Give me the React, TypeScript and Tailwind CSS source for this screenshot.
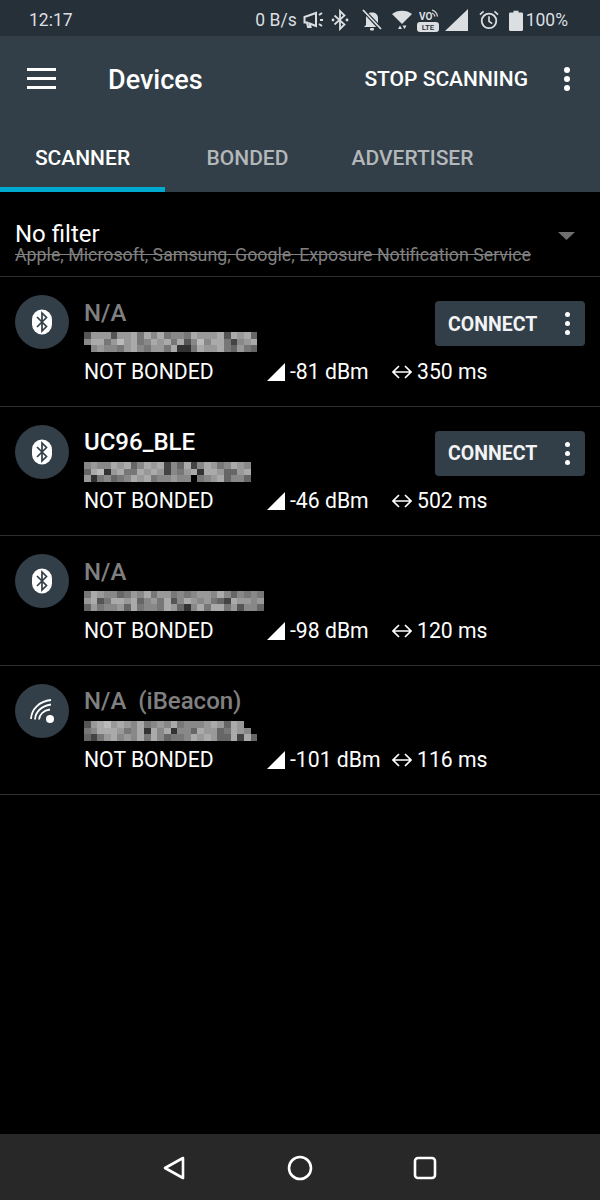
type Device = {
  name: string;
  nameActive?: boolean;
  kind: "ble" | "beacon";
  mosaic: string[];
  rssi: string;
  interval: string;
  connect?: boolean;
};

const devices: Device[] = [
  {
    name: "N/A",
    kind: "ble",
    rssi: "-81 dBm",
    interval: "350 ms",
    connect: true,
    mosaic: [
      "5999599a7a8a7887a999a5a9a6",
      "8aa79b9a78a9a7a58b8aa7489a",
      "0898879a87997a337a99a76976",
    ],
  },
  {
    name: "UC96_BLE",
    nameActive: true,
    kind: "ble",
    rssi: "-46 dBm",
    interval: "502 ms",
    connect: true,
    mosaic: [
      "8988a9a68a9a486a48a978a98",
      "6ab39a77a9a94879a3aa9669a",
      "9378678a9a7889880789a6886",
    ],
  },
  {
    name: "N/A",
    kind: "ble",
    rssi: "-98 dBm",
    interval: "120 ms",
    mosaic: [
      "7a9886798a7997878998a868787",
      "9a57aa9a6897a58a989764a9989",
      "6978896a7887a9638a7aa795886",
    ],
  },
  {
    name: "N/A  (iBeacon)",
    kind: "beacon",
    rssi: "-101 dBm",
    interval: "116 ms",
    mosaic: [
      "59ab9a98a7898a78889a96a900",
      "78aaa978a3a8a3886a9967a980",
      "6479a898a7a86778a9a966a4a6",
    ],
  },
];

function Mosaic({ rows }: { rows: string[] }) {
  const cell = 6.67;
  return (
    <svg width={rows[0].length * cell} height={20} shapeRendering="crispEdges" className="block">
      {rows.map((row, y) =>
        row.split("").map((c, x) => {
          const v = parseInt(c, 16) * 17;
          return <rect key={`${x}-${y}`} x={x * cell} y={y * cell} width={cell + 0.5} height={cell + 0.5} fill={`rgb(${v},${v},${v})`} />;
        })
      )}
    </svg>
  );
}

function Dots({ size = 5, gap = 4 }: { size?: number; gap?: number }) {
  return (
    <div className="flex flex-col items-center" style={{ gap }}>
      <span className="rounded-full bg-white" style={{ width: size, height: size }} />
      <span className="rounded-full bg-white" style={{ width: size, height: size }} />
      <span className="rounded-full bg-white" style={{ width: size, height: size }} />
    </div>
  );
}

function SignalTriangle({ w = 18, h = 18, color = "#ffffff" }: { w?: number; h?: number; color?: string }) {
  return (
    <svg width={w} height={h} viewBox="0 0 18 18" preserveAspectRatio="none" className="shrink-0">
      <path d="M0 18 L18 0 V18 Z" fill={color} />
    </svg>
  );
}

function BleBadge() {
  return (
    <svg width="54" height="54" viewBox="0 0 54 54" className="shrink-0">
      <circle cx="27" cy="27" r="27" fill="#333f48" />
      <rect x="17" y="14.5" width="20" height="25" rx="10" fill="#ffffff" />
      <path d="M22 22 L31.5 31.5 L27 36 V18 L31.5 22.5 L22 32" fill="none" stroke="#333f48" strokeWidth="1.7" />
    </svg>
  );
}

function BeaconBadge() {
  return (
    <svg width="54" height="54" viewBox="0 0 54 54" className="shrink-0">
      <circle cx="27" cy="27" r="27" fill="#333f48" />
      <g fill="none" stroke="#ffffff" strokeWidth="1.8">
        <path d="M16 35 C16.5 25 24 17.5 36 16" />
        <path d="M20 35.5 C20.5 28 26 22 36 20.5" />
        <path d="M24 35.5 C24.5 31 28 26.5 35 25.5" />
      </g>
      <circle cx="35" cy="35" r="4" fill="#ffffff" />
    </svg>
  );
}

function StatusIcons() {
  const c = "#dcdfe1";
  return (
    <div className="flex items-center">
      <svg width="23" height="18" viewBox="0 0 23 18" className="ml-[6px]">
        <path d="M1.5 6 L13 2 V15 L6.5 12.5 L7.5 16 H5 L4 11.5 H1.5 Z" fill="none" stroke={c} strokeWidth="2" />
        <path d="M16 4 L19 2 M17 9 H20 M16 13 L19 15" stroke={c} strokeWidth="2" />
      </svg>
      <svg width="18" height="22" viewBox="0 0 18 22" className="ml-[5px]">
        <path d="M3.5 6.5 L13.5 15.5 L9 20 V2 L13.5 6.5 L3.5 15.5" fill="none" stroke={c} strokeWidth="1.8" />
        <circle cx="2" cy="11" r="1.4" fill={c} />
        <circle cx="16" cy="11" r="1.4" fill={c} />
      </svg>
      <svg width="20" height="22" viewBox="0 0 20 22" className="ml-[13px]">
        <path d="M4 16 V9 C4 5.5 6.5 3.5 10 3.5 C13.5 3.5 16 5.5 16 9 V16 L18 18 H2 Z" fill={c} />
        <rect x="8" y="19" width="4" height="2.5" rx="1" fill={c} />
        <path d="M1 1 L19 20" stroke="#263038" strokeWidth="4" />
        <path d="M1 1 L19 20" stroke={c} strokeWidth="1.8" />
      </svg>
      <svg width="20" height="20" viewBox="0 0 20 20" className="ml-[10px]">
        <path d="M0 4 C5 -0.5 15 -0.5 20 4 L10 14 Z" fill={c} />
        <path d="M6 19 L8 15.5 L10 19 Z M10.5 15.5 H14.5 L12.5 19 Z" fill={c} />
      </svg>
      <svg width="22" height="24" viewBox="0 0 22 24" className="ml-[5px]">
        <text x="2" y="11.5" fontSize="10" fontWeight="700" fill={c} fontFamily="Roboto, sans-serif">VO</text>
        <path d="M15 2 C18 3 20 5 20.5 8.5 M15 5 C16.5 5.5 17.5 6.5 18 8.5" fill="none" stroke={c} strokeWidth="1.2" />
        <rect x="0" y="14" width="22" height="10" rx="3" fill={c} />
        <text x="11" y="22" fontSize="8" fontWeight="500" fill="#263038" textAnchor="middle" fontFamily="Roboto, sans-serif">LTE</text>
      </svg>
      <div className="ml-[6px]">
        <SignalTriangle w={23} h={22} color={c} />
      </div>
      <svg width="20" height="20" viewBox="0 0 22 22" className="ml-[11px]">
        <circle cx="11" cy="12" r="8" fill="none" stroke={c} strokeWidth="2" />
        <path d="M11 7 V12.5 L14.5 15 M1 5 L5 1.5 M21 5 L17 1.5" fill="none" stroke={c} strokeWidth="1.8" />
      </svg>
      <svg width="14" height="21" viewBox="0 0 14 26" preserveAspectRatio="none" className="ml-[10px]">
        <path d="M4.5 1 H9.5 V3 H12.5 A1.5 1.5 0 0 1 14 4.5 V24.5 A1.5 1.5 0 0 1 12.5 26 H1.5 A1.5 1.5 0 0 1 0 24.5 V4.5 A1.5 1.5 0 0 1 1.5 3 H4.5 Z" fill={c} />
      </svg>
      <span className="ml-[3px]">100%</span>
    </div>
  );
}

function DeviceRow({ device }: { device: Device }) {
  return (
    <div className="flex h-[129.5px] border-b border-[#2e2e2e] pl-[15px] pr-[15px] pt-[18px]">
      {device.kind === "ble" ? <BleBadge /> : <BeaconBadge />}
      <div className="ml-[15px] flex-1">
        <div className="flex h-[36px] items-start justify-between">
          <div className={`-mt-[0.4px] whitespace-pre text-[24px] font-medium leading-[36px] ${device.nameActive ? "text-white" : "text-[#808080]"}`}>
            {device.name}
          </div>
          {device.connect && (
            <div className="mt-[6px] flex h-[45px] w-[150px] items-center rounded-[4px] bg-[#333f48] pl-[13px]">
              <span className="mt-[2px] w-[117px] text-[19.5px] font-bold text-[#f2f3f4]">CONNECT</span>
              <Dots />
            </div>
          )}
        </div>
        <div className="mt-[1px]">
          <Mosaic rows={device.mosaic} />
        </div>
        <div className="mt-[4.7px] flex h-[30px] items-center text-[21.2px] leading-[30px] text-white">
          <span className="w-[183px]">NOT BONDED</span>
          <div className="flex w-[125px] items-center">
            <SignalTriangle />
            <span className="ml-[5px]">{device.rssi}</span>
          </div>
          <svg width="20" height="14" viewBox="0 0 20 14" className="shrink-0">
            <path d="M7 1 L1 7 L7 13 M1 7 H19 M13 1 L19 7 L13 13" fill="none" stroke="#ffffff" strokeWidth="1.7" />
          </svg>
          <span className="ml-[5px]">{device.interval}</span>
        </div>
      </div>
    </div>
  );
}

export default function App() {
  return (
    <div className="flex h-[1200px] w-[600px] flex-col overflow-hidden bg-black font-['Roboto',sans-serif]">
      {/* Status bar */}
      <div className="flex h-[36px] items-center justify-between bg-[#263038] pl-[29px] pr-[32px] pt-[4px] text-[17.5px] text-[#dcdfe1]">
        <span>12:17</span>
        <div className="flex items-center">
          <span>0 B/s</span>
          <StatusIcons />
        </div>
      </div>

      {/* Toolbar */}
      <div className="flex h-[86px] items-center bg-[#333f48] pb-[1px] pl-[27px] pr-[30px] text-white">
        <div className="flex w-[29px] flex-col gap-[6px]">
          <span className="h-[3px] bg-white" />
          <span className="h-[3px] bg-white" />
          <span className="h-[3px] bg-white" />
        </div>
        <span className="ml-[52px] mt-[4px] text-[27px] font-medium">Devices</span>
        <span className="ml-auto mt-[2px] text-[21px] font-medium">STOP SCANNING</span>
        <div className="ml-[36px]">
          <Dots size={6} gap={3} />
        </div>
      </div>

      {/* Tabs */}
      <div className="flex h-[70px] bg-[#333f48] text-[21px] font-medium">
        <div className="flex h-full w-[165px] items-center justify-center border-b-[5px] border-[#00a9ce] pt-[9px] text-white">SCANNER</div>
        <div className="flex h-full w-[165px] items-center justify-center pt-[4px] text-[#b3b8bb]">BONDED</div>
        <div className="flex h-full w-[165px] items-center justify-center pt-[4px] text-[#b3b8bb]">ADVERTISER</div>
      </div>

      {/* Filter */}
      <div className="flex h-[85px] items-start justify-between border-b border-[#2e2e2e] pl-[15px] pr-[25px] pt-[30px]">
        <div className="flex flex-col">
          <span className="text-[24px] leading-[24px] text-white">No filter</span>
          <span className="text-[17.8px] leading-[18px] text-[#808080] line-through">
            Apple, Microsoft, Samsung, Google, Exposure Notification Service
          </span>
        </div>
        <svg width="17" height="8" viewBox="0 0 17 8" className="mt-[10px]">
          <path d="M0 0 H17 L8.5 8 Z" fill="#6f6f6f" />
        </svg>
      </div>

      {/* Device list */}
      <div className="flex-1">
        {devices.map((d, i) => (
          <DeviceRow key={i} device={d} />
        ))}
      </div>

      {/* Navigation bar */}
      <div className="flex h-[66px] items-center justify-between bg-[#282828] pl-[162px] pr-[163px] pt-[2px]">
        <svg width="24" height="26" viewBox="0 0 24 26">
          <path d="M21 3 L3 13 L21 23 Z" fill="none" stroke="#ffffff" strokeWidth="2.6" strokeLinejoin="round" />
        </svg>
        <svg width="26" height="26" viewBox="0 0 26 26">
          <circle cx="13" cy="13" r="11" fill="none" stroke="#ffffff" strokeWidth="2.6" />
        </svg>
        <svg width="24" height="24" viewBox="0 0 24 24">
          <rect x="2" y="2" width="20" height="20" rx="3" fill="none" stroke="#ffffff" strokeWidth="2.6" />
        </svg>
      </div>
    </div>
  );
}
